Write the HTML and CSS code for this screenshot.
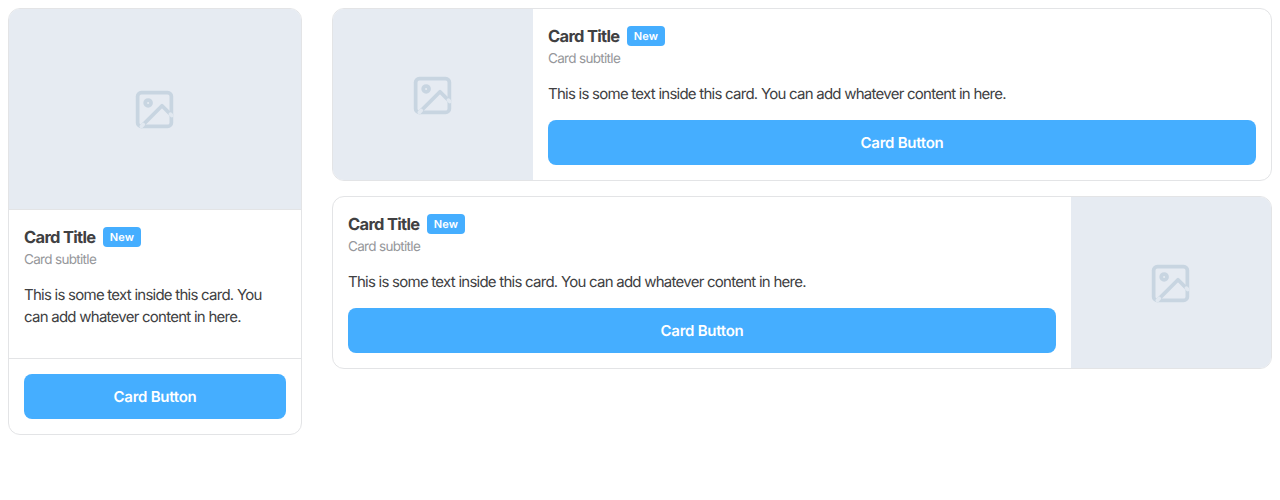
FILE: index.html
```html
<!DOCTYPE html>
<html lang="en">
<head>
<meta charset="utf-8">
<title>Cards</title>
<link rel="stylesheet" href="styles.css">
</head>
<body>
<svg width="0" height="0" class="sprite">
  <symbol id="image" viewBox="0 0 24 24">
    <rect class="line" x="3" y="3" width="18" height="18" rx="2"/>
    <circle class="line" cx="8.6" cy="8.5" r="1.55"/>
    <path class="line" d="M21 15l-5-5L5 21"/>
    <path class="gap" d="M20.5 14.5l.7.7M6 20l-1 1"/>
  </symbol>
</svg>
<main class="layout">
  <article class="card">
    <div class="media"><svg class="icon"><use href="#image"/></svg></div>
    <div class="body">
      <h2 class="title">Card Title <span class="badge">New</span></h2>
      <p class="subtitle">Card subtitle</p>
      <p class="text">This is some text inside this card. You can add whatever content in here.</p>
    </div>
    <div class="footer"><button class="button">Card Button</button></div>
  </article>
  <div class="stack">
    <article class="card horizontal">
      <div class="media"><svg class="icon"><use href="#image"/></svg></div>
      <div class="body">
        <h2 class="title">Card Title <span class="badge">New</span></h2>
        <p class="subtitle">Card subtitle</p>
        <p class="text">This is some text inside this card. You can add whatever content in here.</p>
        <button class="button">Card Button</button>
      </div>
    </article>
    <article class="card horizontal">
      <div class="body">
        <h2 class="title">Card Title <span class="badge">New</span></h2>
        <p class="subtitle">Card subtitle</p>
        <p class="text">This is some text inside this card. You can add whatever content in here.</p>
        <button class="button">Card Button</button>
      </div>
      <div class="media"><svg class="icon"><use href="#image"/></svg></div>
    </article>
  </div>
</main>
</body>
</html>
```
FILE: styles.css
```css
* { box-sizing: border-box; }
body {
  margin: 8px;
  background: #fff;
  color: #404042;
  font: 400 15px/22px Inter, sans-serif;
  letter-spacing: -0.75px;
  text-rendering: geometricPrecision;
}
.sprite { display: none; }
.layout {
  display: grid;
  grid-template-columns: 294px 1fr;
  gap: 30px;
  align-items: start;
}
.stack { display: grid; gap: 15px; }
.card {
  display: flex;
  flex-direction: column;
  overflow: hidden;
  border: 1px solid #e3e4e6;
  border-radius: 12px;
  background: #fff;
}
.media {
  display: flex;
  align-items: center;
  justify-content: center;
  height: 201px;
  border-bottom: 1px solid #e3e4e6;
  background: #e6ebf2;
}
.icon { width: 45px; height: 45px; }
.card > .media:first-child { padding-right: 1px; }
.line {
  fill: none;
  stroke: #c8d5e1;
  stroke-width: 2;
  stroke-linecap: round;
  stroke-linejoin: round;
}
.gap {
  fill: none;
  stroke: #e1e8f0;
  stroke-width: 2;
  stroke-linecap: round;
}
.body { flex: 1; padding: 15px; }
.horizontal { flex-direction: row; }
.horizontal .media {
  width: 200px;
  height: auto;
  padding-top: 2px;
  border: 0;
}
.horizontal .media:last-child { padding-right: 1px; }
.title {
  display: flex;
  align-items: center;
  gap: 8px;
  height: 24px;
  margin: 0;
  font-size: 16.5px;
  font-weight: 700;
  line-height: 24px;
  letter-spacing: -0.7px;
}
.badge {
  height: 20px;
  padding: 0 6.4px;
  border-radius: 4px;
  background: #45aeff;
  color: #fff;
  font-size: 11px;
  font-weight: 600;
  line-height: 20px;
  letter-spacing: 0.2px;
}
.subtitle {
  margin: 0 0 13px;
  color: #96979b;
  font-size: 13.5px;
  line-height: 22px;
  letter-spacing: -0.68px;
}
.text { margin: 0 0 15px; }
.footer { padding: 15px; border-top: 1px solid #e3e4e6; }
.button {
  display: block;
  width: 100%;
  height: 45px;
  padding: 0;
  border: 0;
  border-radius: 8px;
  background: #45aeff;
  color: #fff;
  font: 600 15px/45px Inter, sans-serif;
  letter-spacing: -0.25px;
  text-rendering: inherit;
}
```
